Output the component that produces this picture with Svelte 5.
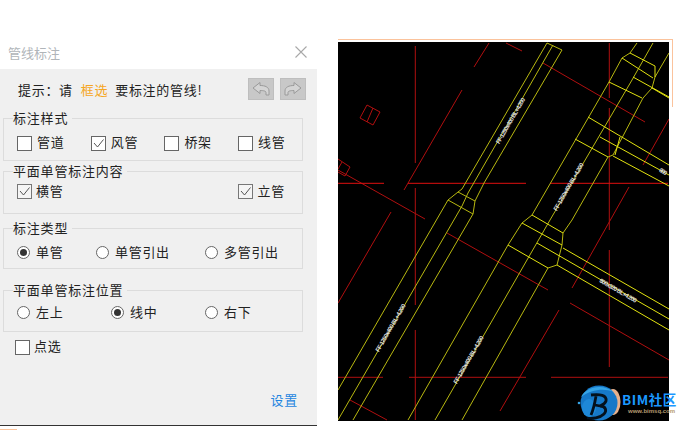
<script>
  const styleOpts = [
    { label: '管道', checked: false },
    { label: '风管', checked: true },
    { label: '桥架', checked: false },
    { label: '线管', checked: false }
  ];
  const typeOpts = [
    { label: '单管', on: true },
    { label: '单管引出', on: false },
    { label: '多管引出', on: false }
  ];
  const posOpts = [
    { label: '左上', on: false },
    { label: '线中', on: true },
    { label: '右下', on: false }
  ];

  // page coordinates, the svg viewBox starts at the drawing's corner
  const redDark = [
    '415.3,46 415.3,163', '415.3,188 415.3,305', '415.3,330 415.3,420',
    '489,43 474,67', '462,90 404,190', '506,43 522,51',
    '543,63 645,122', '609.3,108 609.3,230', '609.3,250 609.3,367',
    '338,170 425,219', '391,212 338,303', '669,119 643,165',
    '629,187 572,288', '447,233 548,290', '570,303 669,360',
    '559,310 500,411', '350,400 387,420',
    '367,105 380,112 373,125 360,118 367,105', '373,108 367,122',
    '338,159 350,167 345,176 338,172', '342,162 338,169'
  ];
  const redBright = [
    '338,183.3 384,183.3', '408,183.3 526,183.3', '550,183.3 668,183.3'
  ];
  const redLow = [
    '338,377.3 383,377.3', '409,377.3 526,377.3', '551,377.3 668,377.3', '609.3,43 609.3,98'
  ];
  // the long runs are dimmer than the branches crossing them
  const yellowDim = [
    '547,43 462,189 458,192 448,200 338,390',
    '553,45 468,193 462,206 338,420',
    '562,50 484,183 475,201 473,214 353,420',
    '547,43 562,50', '458,192 475,201', '448,200 473,214',
    '637,43 630,53 622,58 609,82 532,215 522,223 508,245 408,420',
    '653,43 632,80 550,220 435,420',
    '669,53 655,77 652,88 643,98 613,155 608,157 572,220 563,233 562,245 557,265 548,268 462,420'
  ];
  const yellowBright = [
    '630,53 655,66 655,77', '622,58 653,78', '609,82 642,98',
    '633,77 669,97', '652,88 669,98',
    '588,117 669,165', '600,137 669,175', '575,139 608,157', '613,156 669,186',
    '620,137 615,155',
    '532,215 563,233', '522,223 562,245', '508,245 548,268',
    '563,248 669,309', '537,243 669,319', '557,265 669,330'
  ];
  const labels = [
    { x: 511, y: 121, len: 52, rot: -60, t: 'FF-1250x400 BL+4.200' },
    { x: 569, y: 187, len: 54, rot: -60, t: 'FF-1250x400 BL+4.200' },
    { x: 391, y: 328, len: 54, rot: -60, t: 'FF-1250x400 BL+4.200' },
    { x: 469, y: 360, len: 54, rot: -60, t: 'FF-1250x400 BL+4.200' },
    { x: 618, y: 291, len: 42, rot: 30, t: '800x320 BL+4.200' },
    { x: 663, y: 172, len: 8, rot: 30, t: '800' }
  ];
</script>

<div class="page">
  <section class="dialog">
    <header class="titlebar">
      <span class="title">管线标注</span>
      <svg class="close" width="14" height="14" viewBox="0 0 14 14">
        <path d="M1.5 1.5 L12.5 12.5 M12.5 1.5 L1.5 12.5" />
      </svg>
    </header>

    <div class="body">
      <div class="hint">
        <span class="hint-text">提示：请<em>框选</em>要标注的管线!</span>
        <div class="undo-btns">
          <button aria-label="undo">
            <svg width="20" height="16" viewBox="0 0 20 16">
              <path d="M2 7 L9 1.5 L9 4.5 C14 4.5 18 6 18 10 L18 14 L15 14 L15 11.5 C15 10 12.5 9.5 9 9.5 L9 12.5 Z" />
            </svg>
          </button>
          <button aria-label="redo">
            <svg width="20" height="16" viewBox="0 0 20 16">
              <path d="M18 7 L11 1.5 L11 4.5 C6 4.5 2 6 2 10 L2 14 L5 14 L5 11.5 C5 10 7.5 9.5 11 9.5 L11 12.5 Z" />
            </svg>
          </button>
        </div>
      </div>

      <fieldset class="group g1">
        <legend>标注样式</legend>
        <div class="row four">
          {#each styleOpts as o}
            <div class="opt">
              <span class="check">
                {#if o.checked}
                  <svg width="13" height="13" viewBox="0 0 13 13"><path d="M2 6 L5.5 10 L11.5 2.5" /></svg>
                {/if}
              </span>
              <span>{o.label}</span>
            </div>
          {/each}
        </div>
      </fieldset>

      <fieldset class="group g2">
        <legend>平面单管标注内容</legend>
        <div class="row split">
          <div class="opt">
            <span class="check small"><svg width="13" height="13" viewBox="0 0 13 13"><path d="M2 6 L5.5 10 L11.5 2.5" /></svg></span>
            <span>横管</span>
          </div>
          <div class="opt">
            <span class="check small"><svg width="13" height="13" viewBox="0 0 13 13"><path d="M2 6 L5.5 10 L11.5 2.5" /></svg></span>
            <span>立管</span>
          </div>
        </div>
      </fieldset>

      <fieldset class="group g3">
        <legend>标注类型</legend>
        <div class="row radios type">
          {#each typeOpts as o}
            <div class="opt">
              <span class="radio" class:on={o.on}></span>
              <span>{o.label}</span>
            </div>
          {/each}
        </div>
      </fieldset>

      <fieldset class="group g4">
        <legend>平面单管标注位置</legend>
        <div class="row radios pos">
          {#each posOpts as o}
            <div class="opt">
              <span class="radio" class:on={o.on}></span>
              <span>{o.label}</span>
            </div>
          {/each}
        </div>
      </fieldset>

      <div class="opt pick">
        <span class="check"></span>
        <span>点选</span>
      </div>

      <div class="footer"><span class="settings">设置</span></div>
    </div>
  </section>

  <div class="cad-area">
    <div class="frame-line"></div>
    <div class="cad">
      <svg width="331" height="379" viewBox="338 42 331 379">
        <rect x="338" y="42" width="331" height="379" fill="#000" />
        {#each redDark as p}
          <polyline points={p} class="red-dark" />
        {/each}
        {#each redBright as p}
          <polyline points={p} class="red-bright" />
        {/each}
        {#each redLow as p}
          <polyline points={p} class="red-low" />
        {/each}
        {#each yellowDim as p}
          <polyline points={p} class="yel-dim" />
        {/each}
        {#each yellowBright as p}
          <polyline points={p} class="yel-bright" />
        {/each}
        {#each labels as l}
          <text
            x={l.x}
            y={l.y}
            transform="rotate({l.rot} {l.x} {l.y})"
            text-anchor="middle"
            dominant-baseline="middle"
            textLength={l.len}
            class="duct-label"
          >{l.t}</text>
        {/each}
      </svg>
    </div>

    <div class="logo">
      <svg width="50" height="40" viewBox="0 0 50 40">
        <ellipse cx="41" cy="20" rx="7.5" ry="13" fill="#e6b08c" />
        <ellipse cx="27" cy="21" rx="18.5" ry="17.5" fill="#1678c8" />
        <path d="M9 15 C14 5 30 1 42 10 C32 6 20 7 9 15 Z" fill="#36a4e6" />
        <ellipse cx="17" cy="26" rx="7" ry="9" fill="#1e88d8" />
        <path d="M19 13 C28 12 35 13 34 19 C33 22 30 23 28 24 C34 24 35 29 32 32 C28 36 20 37 15 36 M24 14 C23 20 22 26 19 33 M23 23 L28 24" fill="none" stroke="#04101c" stroke-width="2.8" />
        <circle cx="7" cy="21" r="1.3" fill="#36a4e6" />
      </svg>
      <div class="logo-text">
        <span class="brand">BIM社区</span>
        <span class="url">www.bimsq.com</span>
      </div>
    </div>
  </div>

  <div class="bottom-mark"></div>
</div>

<style>
  :global(body) {
    margin: 0;
    background: #fff;
  }

  .page {
    position: relative;
    width: 682px;
    height: 433px;
    overflow: hidden;
    display: flex;
    align-items: flex-start;
    font-family: "Noto Sans CJK SC", "Liberation Sans", sans-serif;
    color: #222;
  }

  .dialog {
    width: 317px;
    flex: none;
    margin-top: 30px;
    border-bottom: 1px solid #333;
  }

  .titlebar {
    height: 39px;
    background: #fff;
    display: flex;
    align-items: center;
    justify-content: space-between;
    padding: 5px 9px 0 8px;
    box-sizing: border-box;
  }

  .title {
    font-size: 13px;
    color: #b0b5b9;
  }

  .close path {
    stroke: #a8a8a8;
    fill: none;
    stroke-width: 1.1;
  }

  .body {
    height: 356px;
    background: #f0f0f0;
    box-sizing: border-box;
    padding: 9px 14px 0 3px;
    font-size: 13px;
    letter-spacing: 0.7px;
  }

  .hint {
    display: flex;
    justify-content: space-between;
    align-items: center;
    height: 22px;
    padding-left: 15px;
  }

  .hint-text em {
    font-style: normal;
    color: #f5a623;
    margin: 0 7px 0 8px;
  }

  .undo-btns {
    display: flex;
    gap: 6px;
    margin-right: -3px;
  }

  .undo-btns button {
    width: 26px;
    height: 22px;
    padding: 0;
    background: #c8c8c8;
    border: 1px solid #bebebe;
    display: flex;
    align-items: center;
    justify-content: center;
  }

  .undo-btns path {
    fill: #d4d4d4;
    stroke: #9a9a9a;
    stroke-width: 1;
  }

  .group {
    margin: 0;
    padding: 0 0 0 10px;
    width: 300px;
    box-sizing: border-box;
    border: 1px solid #dcdcdc;
    min-inline-size: 0;
  }

  .group legend {
    padding: 0 4px 0 0;
    margin-left: -1px;
    line-height: 14px;
    letter-spacing: 0.8px;
    font-size: 13px;
  }

  .g1 { height: 50px; margin-top: 11px; }
  .g2 { height: 50px; margin-top: 3px; }
  .g3 { height: 48px; margin-top: 7px; }
  .g4 { height: 49px; margin-top: 14px; }

  .row {
    display: flex;
    align-items: center;
  }

  .four { padding: 0 3px; margin-top: 6px; }
  .four .opt { flex: none; width: 73.7px; gap: 5px; }

  .split {
    justify-content: space-between;
    padding: 0 17px 0 3px;
    margin-top: 2px;
  }

  .split .opt:last-child { gap: 5px; }

  .radios { margin-top: 6px; padding-left: 3px; }
  .pos { margin-top: 4px; }
  .radios .opt { gap: 6px; flex: none; }
  .type .opt:nth-child(1) { width: 79px; }
  .type .opt:nth-child(2) { width: 109px; }
  .pos .opt { width: 94px; }

  .opt {
    display: flex;
    align-items: center;
    gap: 4px;
    height: 20px;
  }

  .check {
    width: 13px;
    height: 13px;
    flex: none;
    background: #fff;
    border: 1px solid #666;
    position: relative;
    top: 2px;
    display: inline-flex;
  }

  .check.small {
    background: #f5f5f5;
    border-color: #777;
    top: 1px;
  }

  .check path {
    fill: none;
    stroke: #555;
    stroke-width: 1;
  }

  .radio {
    width: 13px;
    height: 13px;
    flex: none;
    box-sizing: border-box;
    border: 1px solid #666;
    border-radius: 50%;
    background: #fff;
    position: relative;
    top: 1px;
  }

  .radio.on::after {
    content: "";
    position: absolute;
    left: 2px;
    top: 2px;
    width: 7px;
    height: 7px;
    border-radius: 50%;
    background: #333;
  }

  .pick {
    margin: 3px 0 0 12px;
  }

  .footer {
    display: flex;
    justify-content: flex-end;
    margin-top: 35px;
  }

  .settings {
    color: #1f86e0;
    margin-right: 5px;
  }

  .cad-area {
    margin-left: 21px;
    margin-top: 39px;
    position: relative;
    flex: none;
    width: 335px;
  }

  .frame-line {
    height: 68px;
    box-sizing: border-box;
    border-top: 1px solid #fbc39c;
    border-right: 1px solid #fbc39c;
  }

  .cad {
    position: absolute;
    left: 0;
    top: 3px;
    width: 331px;
    height: 379px;
  }

  .cad svg {
    display: block;
  }

  .cad polyline {
    fill: none;
    stroke-width: 1;
  }

  .red-dark { stroke: #b00f0f; stroke-width: 1.2; }
  .red-bright { stroke: #e01010; stroke-width: 1.2; }
  .red-low { stroke: #b01010; stroke-width: 1.2; }
  .yel-dim { stroke: #b8b810; }
  .yel-bright { stroke: #e2e210; }

  .duct-label {
    font-family: "Liberation Sans", sans-serif;
    font-size: 6px;
    font-weight: 700;
    fill: #e2e2e2;
  }

  .logo {
    position: absolute;
    left: 234px;
    top: 343px;
    display: flex;
    align-items: flex-start;
  }

  .logo-text {
    display: flex;
    flex-direction: column;
    margin-top: 9px;
  }

  .brand {
    font-size: 13.5px;
    line-height: 17px;
    font-weight: 700;
    letter-spacing: 0.5px;
    color: #1b98ff;
    white-space: nowrap;
  }

  .url {
    font-family: "Liberation Sans", sans-serif;
    font-size: 6px;
    line-height: 7px;
    font-weight: 700;
    color: #b59a70;
    margin-left: 6px;
    white-space: nowrap;
  }

  .bottom-mark {
    position: absolute;
    left: 0;
    top: 429px;
    width: 17px;
    height: 1px;
    background: #fbc39c;
  }
</style>
